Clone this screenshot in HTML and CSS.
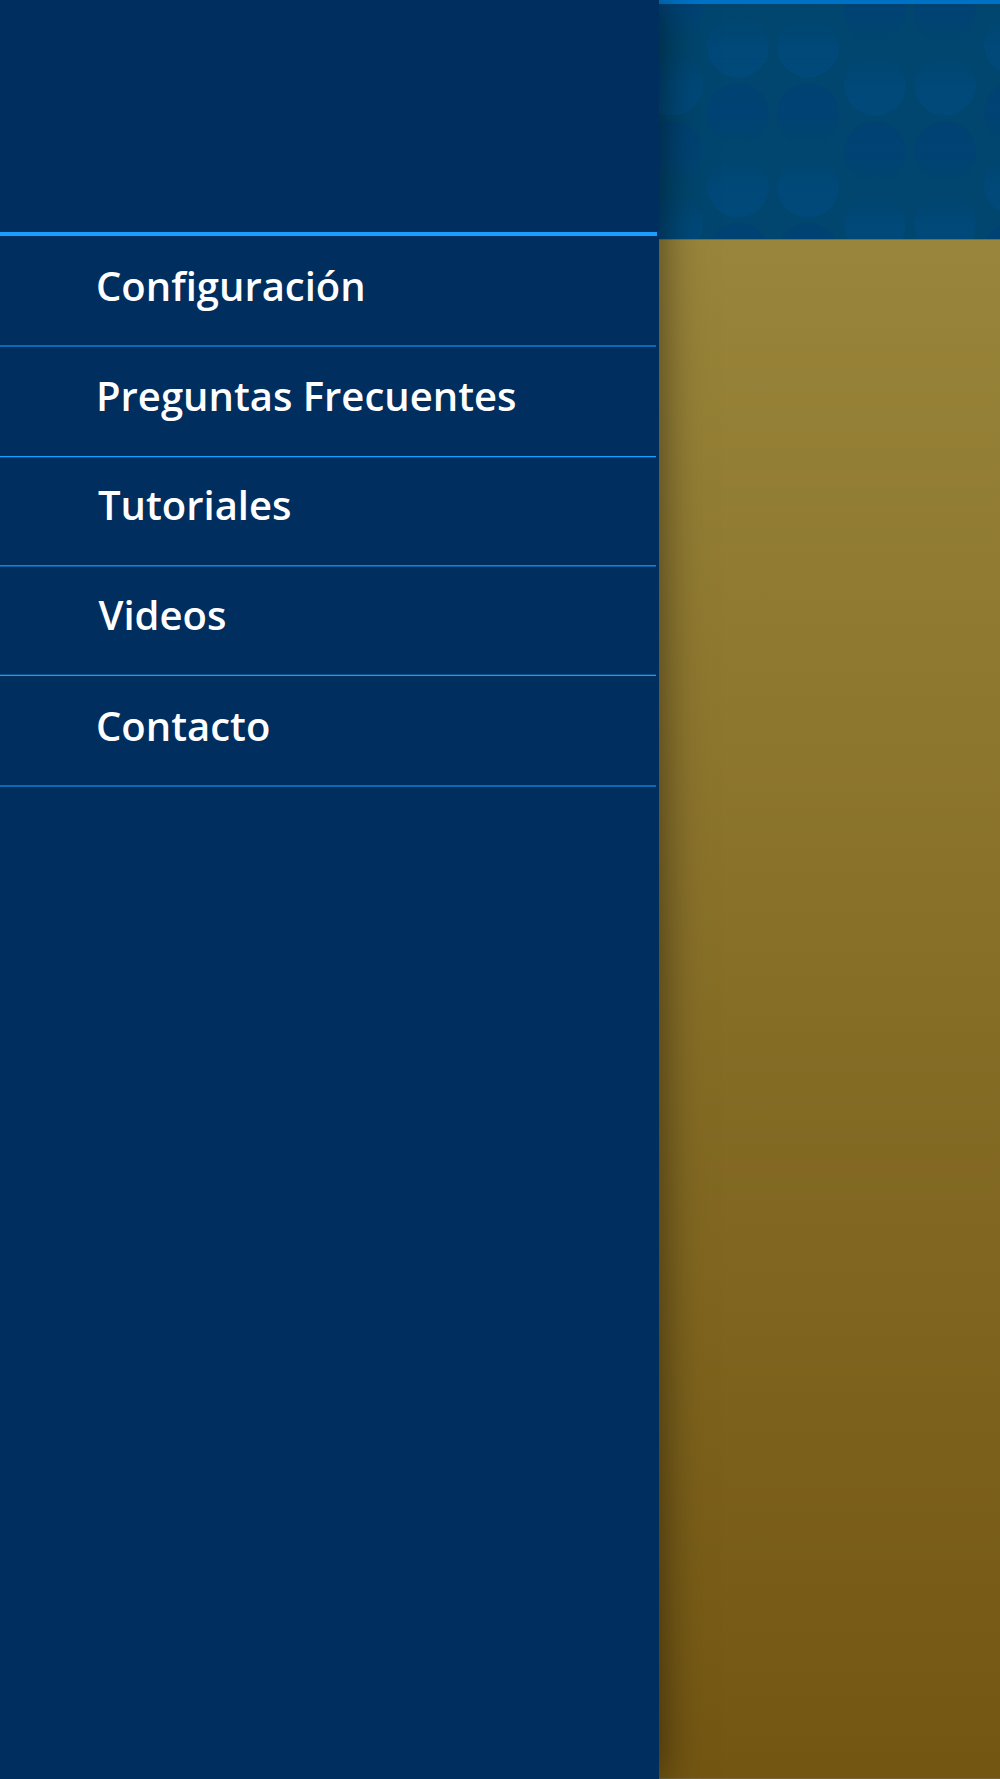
FILE: index.html
```html
<!DOCTYPE html>
<html lang="es">
<head>
<meta charset="utf-8">
<title>Menú</title>
<link rel="stylesheet" href="styles.css">
</head>
<body>
<div class="app">
  <aside class="drawer">
    <div class="drawer-head"></div>
    <nav class="menu">
      <a class="item config">Configuración</a>
      <a class="item faq">Preguntas Frecuentes</a>
      <a class="item tutorials">Tutoriales</a>
      <a class="item videos">Videos</a>
      <a class="item contact">Contacto</a>
    </nav>
  </aside>
  <main class="page">
    <header class="banner">
      <svg class="dots" width="341" height="235" viewBox="659 4 341 235" aria-hidden="true">
        <defs>
          <linearGradient id="light" x1="0" y1="0" x2="0" y2="1">
            <stop offset="0" stop-color="#00487a" stop-opacity=".1"/>
            <stop offset=".5" stop-color="#00497a" stop-opacity=".85"/>
            <stop offset="1" stop-color="#004a7b" stop-opacity=".95"/>
          </linearGradient>
          <linearGradient id="dark" x1="0" y1="0" x2="0" y2="1">
            <stop offset="0" stop-color="#004272"/>
            <stop offset=".5" stop-color="#004374"/>
            <stop offset=".75" stop-color="#004474" stop-opacity=".7"/>
            <stop offset="1" stop-color="#004572" stop-opacity="0"/>
          </linearGradient>
          <g id="column">
            <circle cy="-94" r="31" fill="url(#light)"/>
            <circle cy="-26" r="31" fill="url(#dark)"/>
            <circle cy="46.500" r="31" fill="url(#light)"/>
            <circle cy="114" r="31" fill="url(#dark)"/>
            <circle cy="186.500" r="31" fill="url(#light)"/>
            <circle cy="254" r="31" fill="url(#dark)"/>
          </g>
        </defs>
        <use href="#column" x="672" y="38"/>
        <use href="#column" x="738"/>
        <use href="#column" x="808"/>
        <use href="#column" x="875" y="38"/>
        <use href="#column" x="945" y="38"/>
        <use href="#column" x="1015" y="-2"/>
      </svg>
    </header>
    <div class="content"></div>
  </main>
</div>
</body>
</html>
```
FILE: styles.css
```css
* { box-sizing: border-box; }
body {
  margin: 0;
  font-family: "Open Sans", "Noto Sans", sans-serif;
}
.app {
  display: flex;
  height: 1779px;
  overflow: hidden;
}
.drawer {
  width: 659px;
  flex: none;
  background: #002e5f;
  box-shadow: 0 0 40px 2px rgba(0, 0, 0, .5);
  z-index: 1;
}
.drawer-head {
  width: 657px;
  height: 236px;
  border-bottom: 4px solid #189fff;
}
.menu {
  display: flex;
  flex-direction: column;
  width: 656px;
}
.item {
  --upper: #0c6ab4;
  --lower: #0c6ab4;
  height: 111px;
  padding: 23px 0 0 96px;
  color: #fff;
  font-size: 40px;
  font-weight: 600;
  line-height: 54px;
  background: linear-gradient(var(--upper) 50%, var(--lower) 50%) bottom / 100% 2px no-repeat;
}
.faq {
  --upper: #189fff;
  --lower: #0a4d8d;
  padding-top: 22px;
}
.tutorials {
  --upper: #1283d8;
  --lower: #0b5da2;
  height: 109px;
  padding: 20px 0 0 98px;
}
.videos {
  --upper: #0a4d8d;
  --lower: #189fff;
  height: 109px;
  padding: 21px 0 0 98.5px;
}
.page {
  flex: 1;
  display: flex;
  flex-direction: column;
}
.banner {
  height: 239px;
  border-top: 4px solid #0072c5;
  background: #00466e;
}
.dots {
  display: block;
  filter: blur(.6px);
}
.content {
  flex: 1;
  background: linear-gradient(#99853b, #735612);
  border-top: 1px solid #74703c;
  border-bottom: 1px solid #786438;
}
```
